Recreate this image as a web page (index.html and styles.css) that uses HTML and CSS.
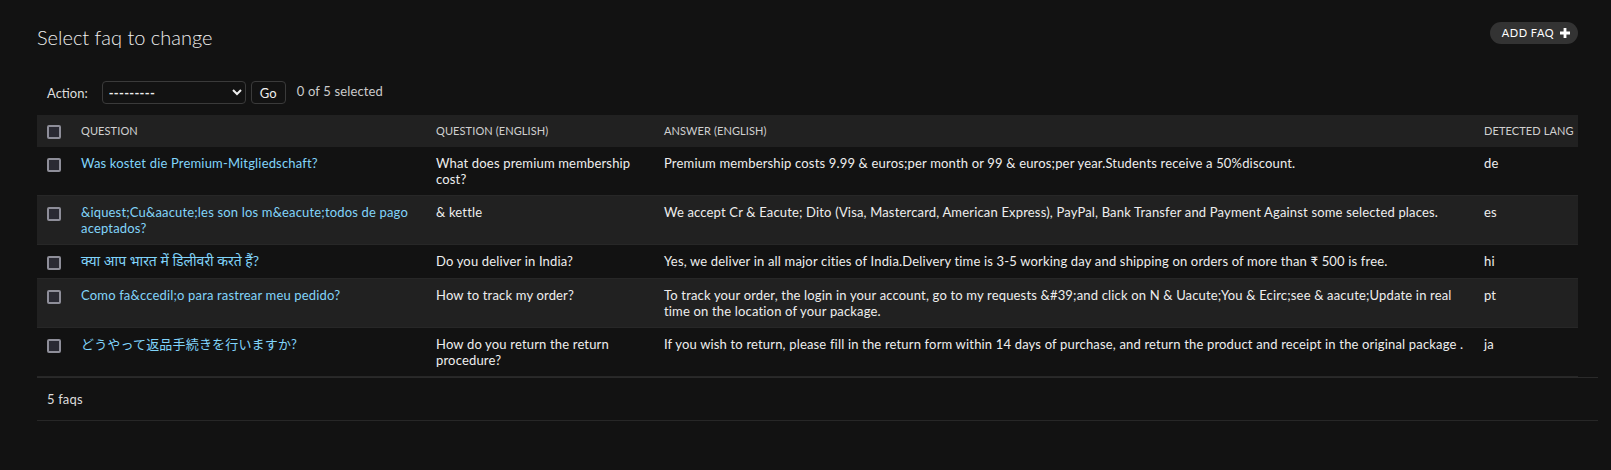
FILE: index.html
```html
<!DOCTYPE html>
<html lang="en">
<head>
<meta charset="utf-8">
<title>Select faq to change</title>
<link rel="stylesheet" href="styles.css">
</head>
<body>
<div class="content">
  <div class="page-head">
    <h1 class="title">Select faq to change</h1>
    <a class="add-btn" href="#">ADD FAQ
      <svg class="plus" width="10" height="10" viewBox="0 0 10 10"><path d="M3.6 0h2.8v3.6H10v2.8H6.4V10H3.6V6.4H0V3.6h3.6z" fill="#fff"/></svg>
    </a>
  </div>

  <div class="changelist">
    <div class="actions">
      <label class="action-label">Action:
        <select class="action-select"><option>---------</option></select>
      </label>
      <button class="go-btn" type="button">Go</button>
      <span class="counter">0 of 5 selected</span>
    </div>

    <table class="results">
      <colgroup>
        <col class="c-check"><col class="c-q"><col class="c-qe"><col class="c-ans"><col class="c-lang">
      </colgroup>
      <thead>
        <tr>
          <th class="check-cell"><input type="checkbox" class="cb"></th>
          <th>Question</th>
          <th>Question (English)</th>
          <th>Answer (English)</th>
          <th>Detected lang</th>
        </tr>
      </thead>
      <tbody>
        <tr>
          <td class="check-cell"><input type="checkbox" class="cb"></td>
          <th class="link-cell"><a href="#">Was kostet die Premium-Mitgliedschaft?</a></th>
          <td>What does premium membership cost?</td>
          <td>Premium membership costs 9.99 &amp; euros;per month or 99 &amp; euros;per year.Students receive a 50%discount.</td>
          <td>de</td>
        </tr>
        <tr>
          <td class="check-cell"><input type="checkbox" class="cb"></td>
          <th class="link-cell"><a href="#">&amp;iquest;Cu&amp;aacute;les son los m&amp;eacute;todos de pago aceptados?</a></th>
          <td>&amp; kettle</td>
          <td>We accept Cr &amp; Eacute; Dito (Visa, Mastercard, American Express), PayPal, Bank Transfer and Payment Against some selected places.</td>
          <td>es</td>
        </tr>
        <tr>
          <td class="check-cell"><input type="checkbox" class="cb"></td>
          <th class="link-cell"><a href="#" lang="hi" class="deva">क्या आप भारत में डिलीवरी करते हैं?</a></th>
          <td>Do you deliver in India?</td>
          <td>Yes, we deliver in all major cities of India.Delivery time is 3-5 working day and shipping on orders of more than ₹ 500 is free.</td>
          <td>hi</td>
        </tr>
        <tr>
          <td class="check-cell"><input type="checkbox" class="cb"></td>
          <th class="link-cell"><a href="#">Como fa&amp;ccedil;o para rastrear meu pedido?</a></th>
          <td>How to track my order?</td>
          <td>To track your order, the login in your account, go to my requests &amp;#39;and click on N &amp; Uacute;You &amp; Ecirc;see &amp; aacute;Update in real time on the location of your package.</td>
          <td>pt</td>
        </tr>
        <tr>
          <td class="check-cell"><input type="checkbox" class="cb"></td>
          <th class="link-cell"><a href="#" lang="ja">どうやって返品手続きを行いますか?</a></th>
          <td>How do you return the return procedure?</td>
          <td>If you wish to return, please fill in the return form within 14 days of purchase, and return the product and receipt in the original package .</td>
          <td>ja</td>
        </tr>
      </tbody>
    </table>

    <p class="paginator">5 faqs</p>
  </div>
</div>
</body>
</html>
```

FILE: styles.css
```css
html, body {
  margin: 0;
  padding: 0;
  background: #121212;
}

body {
  color: #eeeeee;
  font-family: Lato, "Noto Sans", "Noto Sans Devanagari", "Noto Sans CJK JP", sans-serif;
  font-size: 13px;
  line-height: 16px;
  color-scheme: dark;
}

.content {
  padding: 25px 13px 40px 37px;
}

.page-head {
  display: flex;
  justify-content: space-between;
  align-items: flex-start;
  padding-right: 20px;
}

.title {
  margin: 0;
  font-size: 20px;
  line-height: 24px;
  font-weight: 300;
  color: #eeeeee;
}

.add-btn {
  display: flex;
  align-items: center;
  gap: 6px;
  margin-top: -3px;
  height: 22px;
  padding: 0 8px 0 12px;
  border-radius: 15px;
  background: #333333;
  color: #ffffff;
  font-size: 11px;
  letter-spacing: 0.5px;
  text-decoration: none;
}

.plus {
  display: block;
}

.actions {
  display: flex;
  align-items: center;
  margin-top: 32px;
  height: 23px;
  padding-left: 10px;
}

.action-label {
  display: flex;
  align-items: center;
  gap: 14px;
  color: #dddddd;
}

.action-select {
  width: 144px;
  height: 23px;
  background: #121212;
  color: #eeeeee;
  border: 1px solid #3a3a3a;
  border-radius: 4px;
  font-family: inherit;
  font-size: 13px;
  font-weight: 700;
  letter-spacing: 0.3px;
  padding: 0 2px;
}

.go-btn {
  margin-left: 5px;
  width: 35px;
  height: 23px;
  background: #121212;
  color: #eeeeee;
  border: 1px solid #3a3a3a;
  border-radius: 4px;
  font-family: inherit;
  font-size: 13px;
  padding: 0;
}

.counter {
  margin-left: 11px;
  color: #cccccc;
  margin-top: -3px;
  letter-spacing: 0.15px;
}

.results {
  margin-top: 11px;
  width: 1541px;
  table-layout: fixed;
  border-collapse: collapse;
}

.c-check { width: 36px; }
.c-q { width: 355px; }
.c-qe { width: 228px; }
.c-ans { width: 820px; }
.c-lang { width: 102px; }

.results thead th {
  background: #212121;
  color: #d0d0d0;
  font-size: 11px;
  font-weight: 400;
  text-transform: uppercase;
  text-align: left;
  white-space: nowrap;
  padding: 8px;
  line-height: 16px;
  letter-spacing: 0.1px;
}

.results td,
.results tbody th {
  padding: 8px;
  vertical-align: top;
  text-align: left;
  font-weight: 400;
  letter-spacing: 0.17px;
  border-bottom: 1px solid #272727;
}

.results tbody tr:nth-child(even) {
  background: #212121;
}

.results .check-cell {
  padding-left: 10px;
  padding-right: 0;
}

.cb {
  appearance: none;
  display: block;
  width: 14px;
  height: 14px;
  margin: 1px 0 0;
  box-sizing: border-box;
  border: 2px solid #8e8e99;
  border-radius: 2px;
  background: #2a2a33;
}

.results tbody .cb {
  margin-top: 3px;
}

.link-cell a {
  color: #81d4fa;
  text-decoration: none;
}

.link-cell .deva {
  font-size: 14px;
  letter-spacing: 0;
}

.paginator {
  margin: 0;
  padding: 13px 10px;
  border-top: 1px solid #2a2a2a;
  border-bottom: 1px solid #272727;
  color: #dddddd;
  line-height: 16px;
  letter-spacing: 0.15px;
}
```
